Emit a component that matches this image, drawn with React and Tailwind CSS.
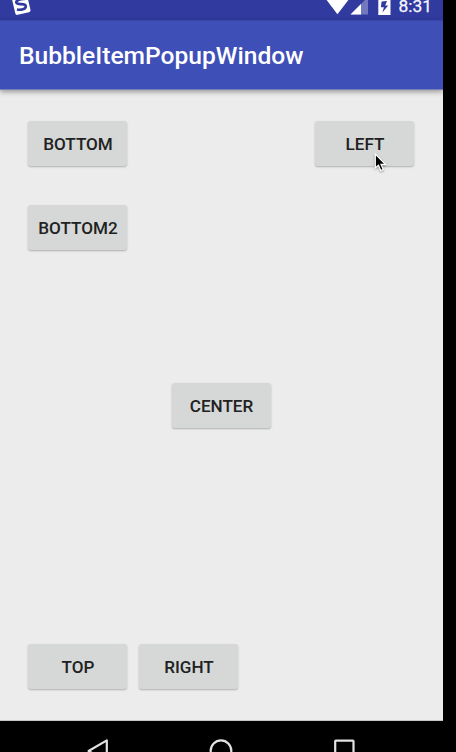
import React from 'react';

function DemoButton({ children }) {
  return (
    <button className="flex h-[45px] w-[99px] shrink-0 items-center justify-center rounded-[3px] bg-[#d6d8d7] text-[17.1px] leading-none font-medium text-[#202121] shadow-[0_1px_2px_rgba(0,0,0,0.26)]">
      <span className="pt-[2px] pl-px">{children}</span>
    </button>
  );
}

function StatusBar() {
  return (
    <div className="relative flex h-[20px] shrink-0 justify-end bg-[#303a9f] pr-[11px]">
      <svg className="absolute inset-0" width="443" height="20" viewBox="0 0 443 20">
        <g transform="rotate(-13 21 4)">
          <rect x="13.3" y="-6" width="15.6" height="19.8" rx="2" fill="#fff" />
          <path
            d="M26 0 C22 -1.4 16.8 -1 16.8 1.6 C16.8 4.6 25.6 3.6 25.2 7 C24.8 10.4 19.5 10 15.8 8.4"
            fill="none"
            stroke="#303a9f"
            strokeWidth="2.6"
          />
        </g>
        <path d="M326.6 0 L348.4 0 L337.4 14.3 Z" fill="#fff" />
        <path d="M350.5 14.5 L368 14.5 L368 -3 Z" fill="#7379bd" />
        <path d="M350.5 14.5 L361 14.5 L361 4 Z" fill="#fff" />
        <rect x="378.3" y="-3" width="12.2" height="18" fill="#fff" />
        <path d="M387 1 L381.6 1.6 L380.9 7.2 L383.9 7.2 L382.4 12.4 L388.2 5.4 L385.2 5.4 Z" fill="#303a9f" />
      </svg>
      <span className="relative h-[20px] text-[17.4px] leading-[13px] text-[#f8f8ff] [-webkit-text-stroke:0.25px_#f8f8ff]">8:31</span>
    </div>
  );
}

function NavBar() {
  return (
    <nav className="flex h-[31px] shrink-0 bg-black">
      <svg width="443" height="31" viewBox="0 0 443 31" fill="none" stroke="#e2e2e2" strokeWidth="2.2" strokeLinejoin="round">
        <path d="M106.8 19.4 L88.6 30 L106.8 40.6 Z" />
        <circle cx="221" cy="29.7" r="10.3" />
        <rect x="335.2" y="19.7" width="18.3" height="20" rx="0.6" />
      </svg>
    </nav>
  );
}

export default function App() {
  return (
    <div className="h-[752px] w-[456px] overflow-hidden bg-black font-['Roboto','Liberation_Sans',sans-serif]">
      <div className="relative flex h-full w-[443px] flex-col overflow-hidden">
        <StatusBar />
        <header className="z-10 flex h-[70px] shrink-0 items-center border-t border-b border-t-[#3845ac] border-b-[#777fb4] bg-[#3e4fb8] pl-[19px] shadow-[0_2px_5px_rgba(0,0,0,0.35)]">
          <h1 className="pt-[2px] text-[24.6px] leading-none font-medium text-white">BubbleItemPopupWindow</h1>
        </header>
        <main className="flex h-[631px] shrink-0 flex-col border-b border-[#c5c5c5] bg-[#ececec] pt-[31px] pr-[29px] pb-[31px] pl-[28px]">
          <div className="flex justify-between">
            <DemoButton>BOTTOM</DemoButton>
            <DemoButton>LEFT</DemoButton>
          </div>
          <div className="mt-[39px] flex">
            <DemoButton>BOTTOM2</DemoButton>
          </div>
          <div className="mt-[133px] flex justify-center">
            <DemoButton>CENTER</DemoButton>
          </div>
          <div className="mt-auto flex gap-3">
            <DemoButton>TOP</DemoButton>
            <DemoButton>RIGHT</DemoButton>
          </div>
        </main>
        <NavBar />
        <svg className="absolute top-[152px] left-[373px] z-20 drop-shadow-[0_1px_1px_rgba(0,0,0,0.35)]" width="15" height="22" viewBox="0 0 15 22">
          <path
            d="M2.3 2 L2.3 16 L5.4 13.2 L7.8 18.6 L10.3 17.5 L8 12.4 L12.4 12.4 Z"
            fill="#000"
            stroke="#fff"
            strokeWidth="1.2"
          />
        </svg>
      </div>
    </div>
  );
}
